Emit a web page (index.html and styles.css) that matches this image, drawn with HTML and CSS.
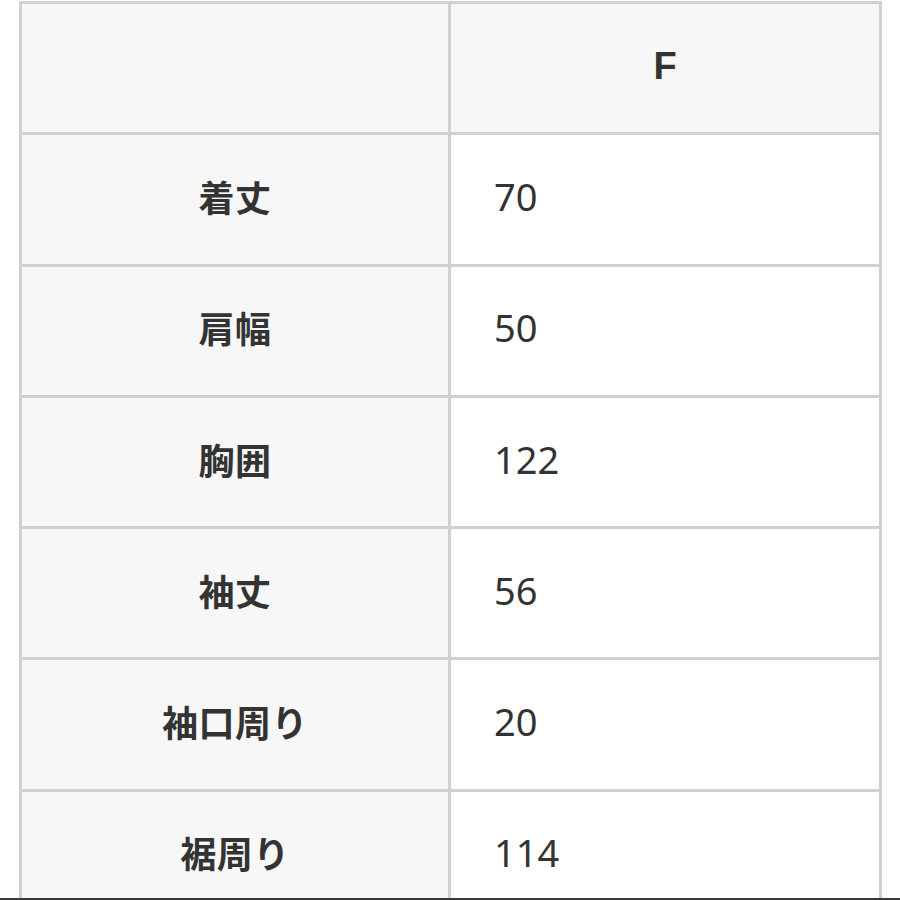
FILE: index.html
```html
<!DOCTYPE html>
<html lang="ja">
<head>
<meta charset="utf-8">
<link rel="stylesheet" href="styles.css">
</head>
<body>
<div class="sheet">
  <div class="cell head"></div>
  <div class="cell head size">F</div>
  <div class="cell label">着丈</div>
  <div class="cell value">70</div>
  <div class="cell label">肩幅</div>
  <div class="cell value">50</div>
  <div class="cell label">胸囲</div>
  <div class="cell value">122</div>
  <div class="cell label">袖丈</div>
  <div class="cell value">56</div>
  <div class="cell label">袖口周り</div>
  <div class="cell value">20</div>
  <div class="cell label">裾周り</div>
  <div class="cell value">114</div>
</div>
<div class="edge"></div>
</body>
</html>
```
FILE: styles.css
```css
html, body {
  margin: 0;
  padding: 0;
  height: 900px;
  overflow: hidden;
  background: #ffffff;
}
body {
  padding: 1px 0 0 19px;
  box-sizing: border-box;
  font-family: "Noto Sans CJK JP", "Noto Sans", sans-serif;
  color: #333333;
}
.sheet {
  width: 863px;
  display: grid;
  grid-template-columns: 426px 428px;
  grid-auto-rows: 128.3px;
  gap: 3px;
  padding: 3px;
  box-sizing: border-box;
  background: #d0d0d0;
}
.cell {
  display: flex;
  align-items: center;
  font-size: 36px;
  line-height: 1;
  padding-bottom: 7px;
  box-sizing: border-box;
}
.head {
  background: #f7f7f7;
  justify-content: center;
}
.size {
  font-family: "Liberation Sans", "Noto Sans", sans-serif;
  font-weight: 700;
  font-size: 38px;
  padding-bottom: 4px;
}
.label {
  background: #f7f7f7;
  justify-content: center;
  font-weight: 700;
  letter-spacing: 0.5px;
}
.value {
  background: #ffffff;
  padding-left: 43px;
  font-family: "Noto Sans", "Noto Sans CJK JP", sans-serif;
  font-size: 38px;
  font-weight: 400;
}
.edge {
  position: fixed;
  left: 0;
  right: 0;
  bottom: 0;
  height: 2px;
  background: #3a3a3a;
}
```
